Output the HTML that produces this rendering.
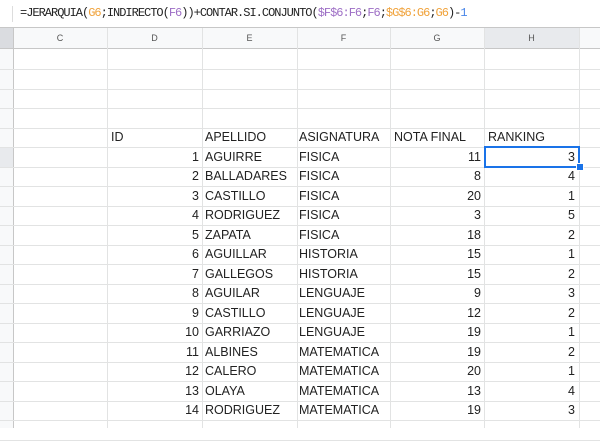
<!DOCTYPE html>
<html><head><style>
body{margin:0;width:600px;height:428px;overflow:hidden;background:#fff;font-family:"Liberation Sans",Arial,sans-serif;position:relative}
.a{position:absolute}
.hl{position:absolute;left:0;width:600px;height:1px;background:#e2e3e3}
.vl{position:absolute;top:28px;height:400px;width:1px;background:#e2e3e3}
.t{position:absolute;font-size:12.5px;color:#222;line-height:19px;white-space:nowrap}
.r{text-align:right}
.ch{position:absolute;top:28px;height:20px;font-size:9px;color:#555;text-align:center;line-height:20px}
</style></head><body>
<div class="a" style="left:0;top:0;width:600px;height:27px;background:#fff"></div>
<div class="a" style="left:12px;top:6px;width:1px;height:16px;background:#ddd"></div>
<div class="a" style="left:20px;top:6px;font-family:'Liberation Mono',monospace;font-size:12px;color:#222;letter-spacing:-1px;white-space:nowrap">=JERARQUIA(<span style="color:#f0a23a">G6</span>;INDIRECTO(<span style="color:#9d6ec5">F6</span>))+CONTAR.SI.CONJUNTO(<span style="color:#9d6ec5">$F$6:F6</span>;<span style="color:#9d6ec5">F6</span>;<span style="color:#f0a23a">$G$6:G6</span>;<span style="color:#f0a23a">G6</span>)-<span style="color:#4a86e8">1</span></div>
<div class="a" style="left:0;top:27px;width:600px;height:1px;background:#c7c7c7"></div>
<div class="a" style="left:0;top:28px;width:600px;height:20px;background:#f8f9fa"></div>
<div class="a" style="left:484px;top:28px;width:95px;height:20px;background:#e8eaed"></div>
<div class="a" style="left:0;top:28px;width:13px;height:400px;background:#f8f9fa"></div>
<div class="a" style="left:0;top:147px;width:13px;height:19.5px;background:#e8eaed"></div>
<div class="a" style="left:0;top:28px;width:13px;height:20px;background:#dadce0"></div>
<div class="a" style="left:0;top:48px;width:600px;height:1px;background:#c7c7c7"></div>
<div class="a" style="left:13px;top:28px;width:1px;height:400px;background:#c7c7c7"></div>
<div class="ch" style="left:13px;width:94px">C</div>
<div class="ch" style="left:107px;width:95px">D</div>
<div class="ch" style="left:202px;width:95px">E</div>
<div class="ch" style="left:297px;width:93px">F</div>
<div class="ch" style="left:390px;width:94px">G</div>
<div class="ch" style="left:484px;width:95px">H</div>
<div class="vl" style="left:107px"></div><div class="vl" style="left:202px"></div><div class="vl" style="left:297px"></div><div class="vl" style="left:390px"></div><div class="vl" style="left:484px"></div><div class="vl" style="left:579px"></div>
<div id="g"></div>
<script>
var h='';
for(var i=0;i<20;i++){var y=69+i*19.5;h+='<div class="hl" style="top:'+Math.round(y)+'px"></div>';}
h+='<div class="t" style="left:111px;top:128px">ID</div><div class="t" style="left:205px;top:128px">APELLIDO</div><div class="t" style="left:299px;top:128px">ASIGNATURA</div><div class="t" style="left:394px;top:128px">NOTA FINAL</div><div class="t" style="left:488px;top:128px">RANKING</div>';
var d=[["AGUIRRE","FISICA",11,3],["BALLADARES","FISICA",8,4],["CASTILLO","FISICA",20,1],["RODRIGUEZ","FISICA",3,5],["ZAPATA","FISICA",18,2],["AGUILLAR","HISTORIA",15,1],["GALLEGOS","HISTORIA",15,2],["AGUILAR","LENGUAJE",9,3],["CASTILLO","LENGUAJE",12,2],["GARRIAZO","LENGUAJE",19,1],["ALBINES","MATEMATICA",19,2],["CALERO","MATEMATICA",20,1],["OLAYA","MATEMATICA",13,4],["RODRIGUEZ","MATEMATICA",19,3]];
for(var i=0;i<d.length;i++){var y=147.5+i*19.5;
h+='<div class="t r" style="left:107px;width:92px;top:'+y+'px">'+(i+1)+'</div>';
h+='<div class="t" style="left:205px;top:'+y+'px">'+d[i][0]+'</div>';
h+='<div class="t" style="left:299px;top:'+y+'px">'+d[i][1]+'</div>';
h+='<div class="t r" style="left:390px;width:91px;top:'+y+'px">'+d[i][2]+'</div>';
h+='<div class="t r" style="left:484px;width:91px;top:'+y+'px">'+d[i][3]+'</div>';}
document.getElementById('g').innerHTML=h;
</script>
<div class="a" style="left:484px;top:146px;width:92px;height:18px;border:2px solid #1a73e8"></div>
<div class="a" style="left:576px;top:163px;width:6px;height:6px;background:#1a73e8;border:1px solid #fff"></div>
</body></html>
